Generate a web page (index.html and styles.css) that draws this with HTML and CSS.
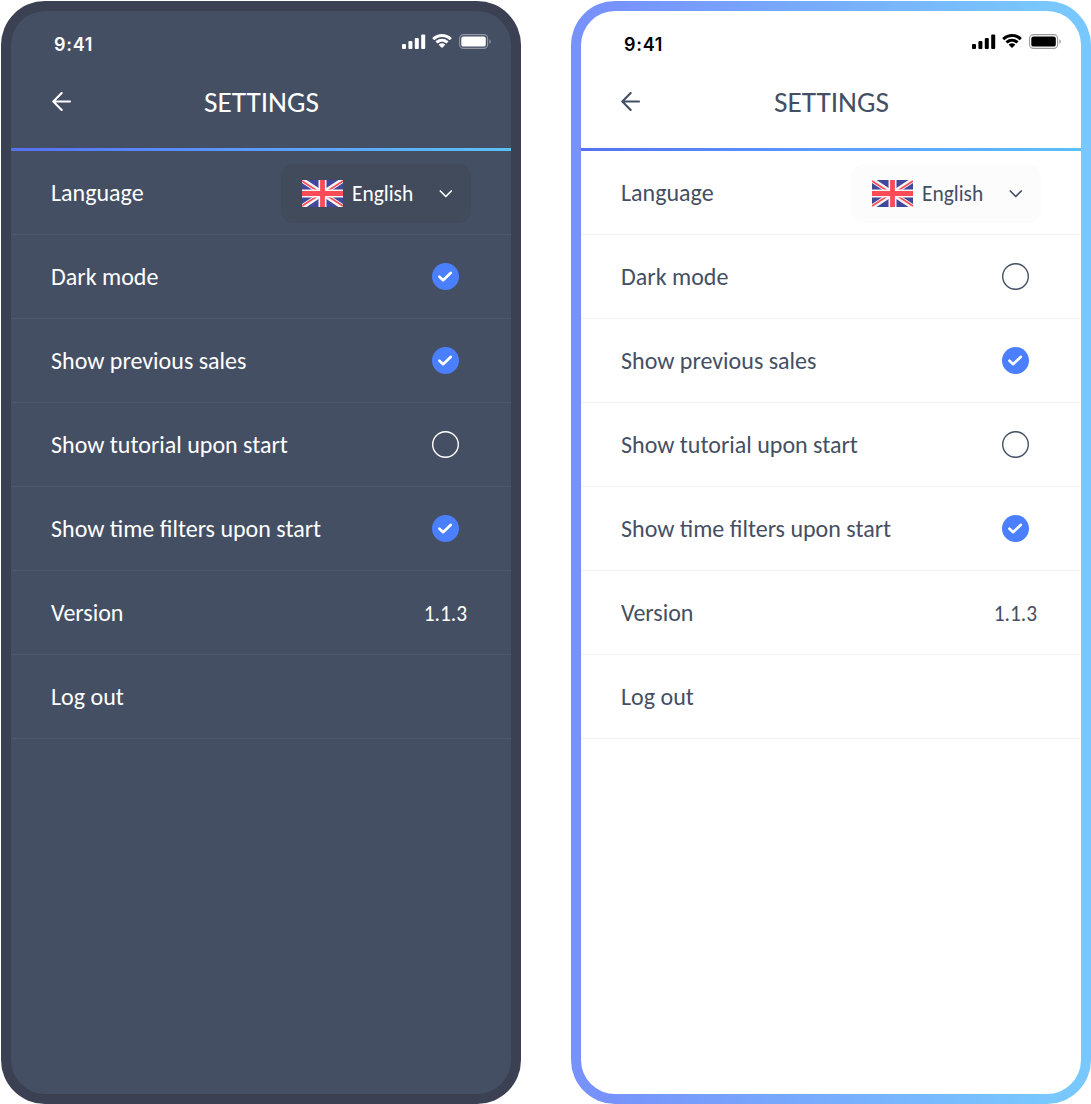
FILE: index.html
```html
<!DOCTYPE html>
<html lang="en">
<head>
<meta charset="utf-8">
<title>Settings</title>
<link rel="stylesheet" href="styles.css">
</head>
<body>
<svg width="0" height="0" class="defs" aria-hidden="true">
  <symbol id="signal" viewBox="0 0 24 16"><rect x="0" y="10" width="4" height="5" rx="1"/><rect x="6.4" y="7" width="4" height="8" rx="1"/><rect x="12.8" y="4" width="4" height="11" rx="1"/><rect x="19.2" y="0.5" width="4" height="14.5" rx="1"/></symbol>
  <symbol id="wifi" viewBox="0 0 20 15"><path d="M10 2.9c2.8 0 5.4 1.1 7.4 3 .2.2.4.2.6 0l1.5-1.500c.2-.2.2-.5 0-.7C14.200-1.200 5.800-1.200.5 3.700c-.2.2-.2.5 0 .7L2 5.900c.2.2.4.2.6 0 2-1.900 4.600-3 7.400-3zM10 7.700c1.500 0 3 .6 4.100 1.600.2.2.5.2.6 0l1.500-1.500c.2-.2.2-.5 0-.7-3.500-3.300-8.900-3.300-12.400 0-.2.2-.2.5 0 .7l1.500 1.500c.1.2.4.2.6 0C7 8.300 8.500 7.700 10 7.700zM13 11c.2-.2.2-.5 0-.7-1.700-1.400-4.300-1.400-6 0-.2.200-.2.500 0 .7l2.700 2.700c.2.200.400.200.600 0z"/></symbol>
  <symbol id="battery" viewBox="0 0 33 16"><rect x=".6" y=".6" width="28" height="13.800" rx="3.800" fill="none" stroke="currentColor" stroke-opacity=".4" stroke-width="1.100"/><rect x="2.300" y="2.400" width="24.500" height="10.200" rx="2.200"/><path d="M30.400 5.200v4.600c2-.9 2-3.700 0-4.600z" fill-opacity=".4"/></symbol>
  <symbol id="back" viewBox="0 0 20 20"><path d="M18 9.500H1.500M9.700 1.100 1.300 9.500l8.400 8.400" fill="none" stroke="currentColor" stroke-width="2.100" stroke-linecap="round" stroke-linejoin="round"/></symbol>
  <symbol id="chevron" viewBox="0 0 14 9"><path d="M1.300 2 6.800 7.500 12.300 2" fill="none" stroke="currentColor" stroke-width="1.700" stroke-linecap="round" stroke-linejoin="round"/></symbol>
  <symbol id="flag" viewBox="0 0 41 27">
    <rect width="41" height="27" rx="1" fill="#41479b"/>
    <path d="M0 0 41 27M41 0 0 27" stroke="#f5f5f5" stroke-width="5"/>
    <path d="M0 1 17 12M41 26 24 15M41 1 24 12M0 26 17 15" stroke="#ff4b55" stroke-width="1.700"/>
    <path d="M20.500 0v27M0 13.500h41" stroke="#f5f5f5" stroke-width="8"/>
    <path d="M20.500 0v27M0 13.500h41" stroke="#ff4b55" stroke-width="4.800"/>
  </symbol>
  <symbol id="on" viewBox="0.5 0.5 27 27"><circle cx="14" cy="14" r="13.500" fill="#4a80ff"/><path d="m7.900 14.200 3.700 3.500 7.800-7.400" fill="none" stroke="#fff" stroke-width="2.600" stroke-linecap="round" stroke-linejoin="round"/></symbol>
  <symbol id="off" viewBox="0.5 0.5 27 27"><circle cx="14" cy="14" r="12.800" fill="none" stroke="currentColor" stroke-width="1.400"/></symbol>
</svg>
<main class="stage">
  <section class="phone dark">
    <div class="screen">
      <div class="status"><span class="time">9:41</span><div class="indicators"><svg class="signal"><use href="#signal"/></svg><svg class="wifi"><use href="#wifi"/></svg><svg class="battery"><use href="#battery"/></svg></div></div>
      <header class="header"><svg class="back"><use href="#back"/></svg><h1 class="title">SETTINGS</h1></header>
      <ul class="list">
        <li class="row"><span class="label">Language</span><div class="select"><svg class="flag"><use href="#flag"/></svg><span class="choice">English</span><svg class="chevron"><use href="#chevron"/></svg></div></li>
        <li class="row"><span class="label">Dark mode</span><svg class="check"><use href="#on"/></svg></li>
        <li class="row"><span class="label">Show previous sales</span><svg class="check"><use href="#on"/></svg></li>
        <li class="row"><span class="label">Show tutorial upon start</span><svg class="check"><use href="#off"/></svg></li>
        <li class="row"><span class="label">Show time filters upon start</span><svg class="check"><use href="#on"/></svg></li>
        <li class="row"><span class="label">Version</span><span class="number">1.1.3</span></li>
        <li class="row"><span class="label">Log out</span></li>
      </ul>
    </div>
  </section>
  <section class="phone light">
    <div class="screen">
      <div class="status"><span class="time">9:41</span><div class="indicators"><svg class="signal"><use href="#signal"/></svg><svg class="wifi"><use href="#wifi"/></svg><svg class="battery"><use href="#battery"/></svg></div></div>
      <header class="header"><svg class="back"><use href="#back"/></svg><h1 class="title">SETTINGS</h1></header>
      <ul class="list">
        <li class="row"><span class="label">Language</span><div class="select"><svg class="flag"><use href="#flag"/></svg><span class="choice">English</span><svg class="chevron"><use href="#chevron"/></svg></div></li>
        <li class="row"><span class="label">Dark mode</span><svg class="check"><use href="#off"/></svg></li>
        <li class="row"><span class="label">Show previous sales</span><svg class="check"><use href="#on"/></svg></li>
        <li class="row"><span class="label">Show tutorial upon start</span><svg class="check"><use href="#off"/></svg></li>
        <li class="row"><span class="label">Show time filters upon start</span><svg class="check"><use href="#on"/></svg></li>
        <li class="row"><span class="label">Version</span><span class="number">1.1.3</span></li>
        <li class="row"><span class="label">Log out</span></li>
      </ul>
    </div>
  </section>
</main>
</body>
</html>
```
FILE: styles.css
```css
* { box-sizing: border-box; }
body { margin: 0; background: #fff; font-family: Carlito, Calibri, "Noto Sans", sans-serif; overflow: hidden; }
svg { display: block; fill: currentColor; flex: none; }
.defs { display: none; }
.stage { display: flex; gap: 50px; padding: 1px 0 0 1px; }
.phone { width: 520px; height: 1103px; flex: none; padding: 10px; border-radius: 44px; }
.screen { height: 1083px; border-radius: 34px; overflow: hidden; }
.dark { background: #3b4052; color: #fff; --line: #4e586a; --select: #414b5c; --clock: #fff; }
.dark .screen { background: #454f63; }
.light { background: linear-gradient(90deg, #7793fb 8%, #78c8ff 92%); color: #454f63; --line: #f1f2f3; --select: #fcfcfc; --clock: #000; }
.light .screen { background: #fff; }
.status { height: 61px; display: flex; justify-content: space-between; padding: 23px 19px 0 43px; color: var(--clock); }
.time { font: 600 18px/21px Inter, sans-serif; letter-spacing: .7px; }
.indicators { display: flex; }
.signal { width: 24px; height: 16px; }
.wifi { width: 20px; height: 15px; margin-left: 6px; }
.battery { width: 33px; height: 16px; margin-left: 7px; }
.header { height: 79px; display: grid; grid-template-columns: 100px 1fr 100px; border-bottom: 3px solid; border-image: linear-gradient(90deg, #5670f0, #5b9cff 50%, #5cc1f8) 1; }
.back { width: 20px; height: 20px; margin: 20px 0 0 41px; }
.light .back { margin-left: 40px; }
.title { margin: 12px 0 0 1px; font-size: 29.3px; line-height: 36px; font-weight: 400; text-align: center; }
.list { margin: 0; padding: 0; list-style: none; }
.row { height: 84px; display: flex; align-items: center; justify-content: space-between; padding: 0 51px 0 40px; border-bottom: 1px solid var(--line); }
.label { font-size: 24px; line-height: 30px; white-space: nowrap; }
.check { width: 27px; height: 27px; margin-right: 1px; }
.select { width: 190px; height: 59px; margin: 2px -11px 0 0; display: flex; align-items: center; padding: 0 18px 0 21px; border-radius: 13px; background: var(--select); }
.flag { width: 41px; height: 27px; }
.choice { margin-left: 9px; font-size: 21.4px; }
.chevron { width: 14px; height: 9px; margin-left: auto; }
.number { font-size: 21.4px; margin: 2px -7px 0 0; }
```
